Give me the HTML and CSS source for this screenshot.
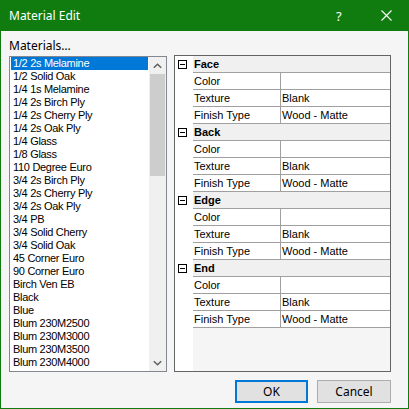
FILE: index.html
```html
<!DOCTYPE html>
<html>
<head>
<meta charset="utf-8">
<link rel="stylesheet" href="styles.css">
</head>
<body>
<div class="window">
  <div class="titlebar">
    <span class="title">Material Edit</span>
    <span class="help">?</span>
    <span class="close"><svg width="11" height="11" viewBox="0 0 11 11"><path d="M0.5 0.5L10.5 10.5M10.5 0.5L0.5 10.5" stroke="#fff" stroke-width="1.1" fill="none"/></svg></span>
  </div>
  <div class="body">
    <div class="main">
      <div class="left">
        <div class="label">Materials…</div>
        <div class="listbox">
          <ul class="items">
            <li class="selected">1/2 2s Melamine</li>
            <li>1/2 Solid Oak</li>
            <li>1/4 1s Melamine</li>
            <li>1/4 2s Birch Ply</li>
            <li>1/4 2s Cherry Ply</li>
            <li>1/4 2s Oak Ply</li>
            <li>1/4 Glass</li>
            <li>1/8 Glass</li>
            <li>110 Degree Euro</li>
            <li>3/4 2s Birch Ply</li>
            <li>3/4 2s Cherry Ply</li>
            <li>3/4 2s Oak Ply</li>
            <li>3/4 PB</li>
            <li>3/4 Solid Cherry</li>
            <li>3/4 Solid Oak</li>
            <li>45 Corner Euro</li>
            <li>90 Corner Euro</li>
            <li>Birch Ven EB</li>
            <li>Black</li>
            <li>Blue</li>
            <li>Blum 230M2500</li>
            <li>Blum 230M3000</li>
            <li>Blum 230M3500</li>
            <li>Blum 230M4000</li>
          </ul>
          <div class="scrollbar">
            <div class="arrow"><svg width="9" height="6" viewBox="0 0 9 6"><path d="M0.8 4.8L4.5 1.2L8.2 4.8" stroke="#606060" stroke-width="1.5" fill="none"/></svg></div>
            <div class="track"><div class="thumb"></div></div>
            <div class="arrow"><svg width="9" height="6" viewBox="0 0 9 6"><path d="M0.8 1.2L4.5 4.8L8.2 1.2" stroke="#606060" stroke-width="1.5" fill="none"/></svg></div>
          </div>
        </div>
      </div>
      <div class="propgrid">
        <div class="row cat">
          <div class="gutter"><span class="minus"></span></div>
          <div class="cell cattitle">Face</div>
        </div>
        <div class="row">
          <div class="gutter"></div>
          <div class="cell"><span class="name">Color</span><span class="value"></span></div>
        </div>
        <div class="row">
          <div class="gutter"></div>
          <div class="cell"><span class="name">Texture</span><span class="value">Blank</span></div>
        </div>
        <div class="row">
          <div class="gutter"></div>
          <div class="cell"><span class="name">Finish Type</span><span class="value">Wood - Matte</span></div>
        </div>
        <div class="row cat">
          <div class="gutter"><span class="minus"></span></div>
          <div class="cell cattitle">Back</div>
        </div>
        <div class="row">
          <div class="gutter"></div>
          <div class="cell"><span class="name">Color</span><span class="value"></span></div>
        </div>
        <div class="row">
          <div class="gutter"></div>
          <div class="cell"><span class="name">Texture</span><span class="value">Blank</span></div>
        </div>
        <div class="row">
          <div class="gutter"></div>
          <div class="cell"><span class="name">Finish Type</span><span class="value">Wood - Matte</span></div>
        </div>
        <div class="row cat">
          <div class="gutter"><span class="minus"></span></div>
          <div class="cell cattitle">Edge</div>
        </div>
        <div class="row">
          <div class="gutter"></div>
          <div class="cell"><span class="name">Color</span><span class="value"></span></div>
        </div>
        <div class="row">
          <div class="gutter"></div>
          <div class="cell"><span class="name">Texture</span><span class="value">Blank</span></div>
        </div>
        <div class="row">
          <div class="gutter"></div>
          <div class="cell"><span class="name">Finish Type</span><span class="value">Wood - Matte</span></div>
        </div>
        <div class="row cat">
          <div class="gutter"><span class="minus"></span></div>
          <div class="cell cattitle">End</div>
        </div>
        <div class="row">
          <div class="gutter"></div>
          <div class="cell"><span class="name">Color</span><span class="value"></span></div>
        </div>
        <div class="row">
          <div class="gutter"></div>
          <div class="cell"><span class="name">Texture</span><span class="value">Blank</span></div>
        </div>
        <div class="row">
          <div class="gutter"></div>
          <div class="cell"><span class="name">Finish Type</span><span class="value">Wood - Matte</span></div>
        </div>
        <div class="filler">
          <div class="gutter"></div>
          <div class="rest"></div>
        </div>
      </div>
    </div>
    <div class="buttons">
      <div class="btn default">OK</div>
      <div class="btn cancel">Cancel</div>
    </div>
  </div>
</div>
</body>
</html>
```

FILE: styles.css
```css
html, body {
  margin: 0;
  padding: 0;
}
body {
  width: 409px;
  height: 409px;
  overflow: hidden;
}
.window {
  width: 409px;
  height: 409px;
  box-sizing: border-box;
  border: 1px solid #107c10;
  border-top: 0;
  background: #f5f5f5;
  display: flex;
  flex-direction: column;
  font-family: "Noto Sans", sans-serif;
  font-size: 12px;
  color: #000;
}
.titlebar {
  height: 31px;
  flex: none;
  background: #107c10;
  margin: 0 -1px;
  display: flex;
  align-items: center;
  color: #fff;
  font-size: 12px;
}
.title {
  margin-left: 9px;
  flex: 1;
}
.help {
  width: 10px;
  margin-right: 35px;
  font-size: 13px;
}
.close {
  width: 11px;
  height: 11px;
  margin-right: 17px;
  display: flex;
}
.body {
  flex: 1;
  display: flex;
  flex-direction: column;
  padding: 7px 17px 5px 8px;
}
.main {
  height: 334px;
  display: flex;
  gap: 7px;
}
.left {
  width: 158px;
  display: flex;
  flex-direction: column;
}
.label {
  height: 18px;
  line-height: 15px;
}
.listbox {
  flex: 1;
  box-sizing: border-box;
  border: 1px solid #828790;
  background: #fff;
  display: flex;
}
.items {
  list-style: none;
  margin: 0;
  padding: 0 1px;
  width: 139px;
  box-sizing: border-box;
  font-family: "Liberation Sans", sans-serif;
  font-size: 11px;
  letter-spacing: -0.3px;
}
.items li {
  height: 13px;
  line-height: 13px;
  padding-left: 2px;
  white-space: nowrap;
}
.items li.selected {
  background: #0078d7;
  color: #fff;
}
.scrollbar {
  width: 17px;
  background: #f0f0f0;
  display: flex;
  flex-direction: column;
}
.arrow {
  height: 17px;
  display: flex;
  align-items: center;
  justify-content: center;
}
.track {
  flex: 1;
}
.thumb {
  margin: 0 1px;
  height: 102px;
  background: #cdcdcd;
}
.propgrid {
  margin-top: 17px;
  width: 217px;
  box-sizing: border-box;
  border: 1px solid #646464;
  display: flex;
  flex-direction: column;
  font-family: "Liberation Sans", sans-serif;
  font-size: 11px;
  background: #fff;
}
.row {
  display: flex;
  height: 17px;
}
.gutter {
  width: 18px;
  flex: none;
  background: #fff;
  display: flex;
  align-items: center;
}
.cell {
  flex: 1;
  display: flex;
  border-bottom: 1px solid #a0a0a0;
  line-height: 16px;
}
.cat .cell {
  background: #f0f0f0;
}
.cattitle {
  font-weight: bold;
  padding-left: 1px;
}
.name {
  width: 88px;
  padding-left: 1px;
  box-sizing: border-box;
  border-right: 1px solid #a0a0a0;
  flex: none;
}
.value {
  flex: 1;
  padding-left: 1px;
}
.minus {
  width: 9px;
  height: 9px;
  box-sizing: border-box;
  border: 1px solid #000;
  margin-left: 3px;
  position: relative;
  background: #fff;
}
.minus::after {
  content: "";
  position: absolute;
  left: 1px;
  top: 3px;
  width: 5px;
  height: 1px;
  background: #000;
}
.filler {
  flex: 1;
  display: flex;
}
.rest {
  flex: 1;
  background: #f5f5f5;
}
.buttons {
  margin-top: 8px;
  display: flex;
  justify-content: flex-end;
  gap: 9px;
}
.btn {
  height: 23px;
  box-sizing: border-box;
  background: #e1e1e1;
  display: flex;
  align-items: center;
  justify-content: center;
}
.btn.default {
  width: 73px;
  border: 2px solid #0078d7;
}
.btn.cancel {
  width: 74px;
  border: 1px solid #adadad;
}
```
